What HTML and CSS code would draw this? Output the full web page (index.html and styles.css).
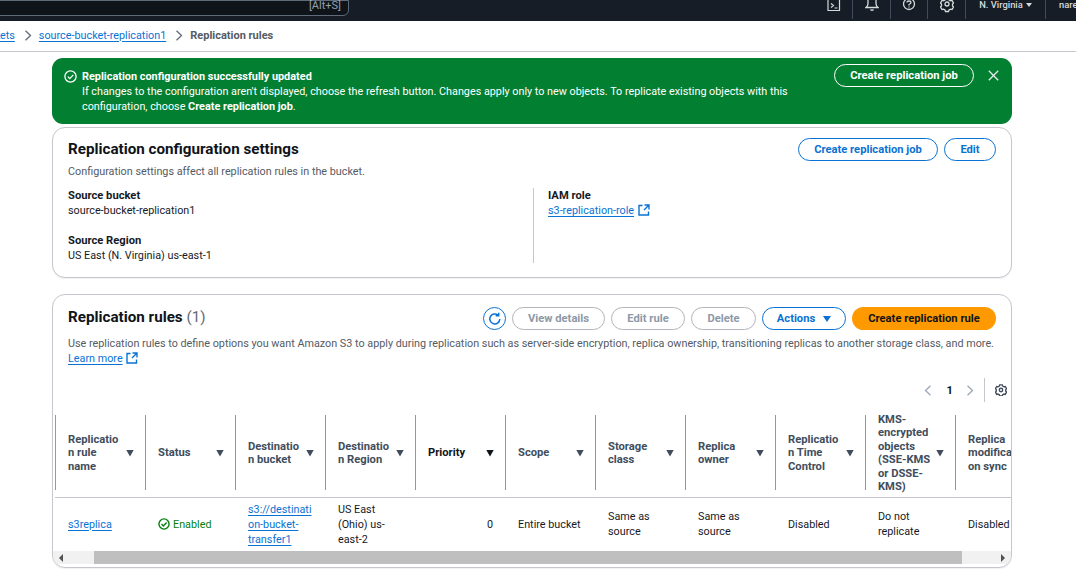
FILE: index.html
```html
<!DOCTYPE html>
<html lang="en">
<head>
<meta charset="utf-8">
<title>Replication rules</title>
<link rel="stylesheet" href="styles.css">
</head>
<body>
<header class="nav">
  <div class="search"><span class="search-key">[Alt+S]</span></div>
  <div class="nav-right">
    <span class="nav-item"><svg width="14" height="16" viewBox="0 0 14 16" fill="none" stroke="#d5dbdb" stroke-width="1.2"><path d="M2 -3h10.500v13.500h-11.500v-13z"/><path d="M4 3.500l2.500 2-2.500 2M7.500 8h3"/></svg></span>
    <span class="nav-item"><svg width="14" height="16" viewBox="0 0 14 16" fill="none" stroke="#d5dbdb" stroke-width="1.300"><path d="M3 -2v5.500q0 2.500-2 4h12q-2-1.500-2-4v-5.500M5.500 9.500q1.500 1.500 3 0"/></svg></span>
    <span class="nav-item nav-item-narrow"><svg width="14" height="16" viewBox="0 0 14 16" fill="none" stroke="#d5dbdb" stroke-width="1.300"><circle cx="7" cy="4" r="5.500"/><path d="M5 2.500q0-1.500 2-1.500t2 1.500q0 1-2 2v1M7 6.500v1"/></svg></span>
    <span class="nav-item"><svg width="14" height="16" viewBox="0 0 14 16" fill="none" stroke="#d5dbdb" stroke-width="1.300"><path d="M5.500 -1.500h3l.5 1.500 1.500.8 1.500-.4 1.500 2.600-1 1.100v1.800l1 1.100-1.500 2.600-1.500-.4-1.500.8-.5 1.500h-3l-.5-1.500-1.500-.8-1.500.4-1.500-2.600 1-1.100v-1.800l-1-1.100 1.500-2.600 1.500.4 1.500-.8z"/><circle cx="7" cy="4" r="2"/></svg></span>
    <span class="nav-item nav-region">N. Virginia <i class="nav-caret"></i></span>
    <span class="nav-user">nare</span>
  </div>
</header>

<nav class="crumbs">
  <a class="link crumb-cut" href="#">ckets</a>
  <svg class="crumb-sep" width="8" height="11" viewBox="0 0 8 11" fill="none" stroke="#5f6b7a" stroke-width="1.300"><path d="M1.500 .8l5 4.700-5 4.700"/></svg>
  <a class="link" href="#">source-bucket-replication1</a>
  <svg class="crumb-sep" width="8" height="11" viewBox="0 0 8 11" fill="none" stroke="#5f6b7a" stroke-width="1.300"><path d="M1.500 .8l5 4.700-5 4.700"/></svg>
  <span class="crumb-current">Replication rules</span>
</nav>

<main class="main">
  <section class="flash">
    <svg class="flash-icon" width="13" height="13" viewBox="0 0 13 13" fill="none" stroke="#fff" stroke-width="1.300"><circle cx="6.500" cy="6.500" r="5.600"/><path d="M3.800 6.600l2 2 3.500-3.700"/></svg>
    <div class="flash-text">
      <strong>Replication configuration successfully updated</strong><br>
      If changes to the configuration aren't displayed, choose the refresh button. Changes apply only to new objects. To replicate existing objects with this<br>
      configuration, choose <strong>Create replication job</strong>.
    </div>
    <button class="btn btn-flash">Create replication job</button>
    <svg class="flash-close" width="11" height="11" viewBox="0 0 11 11" fill="none" stroke="#e9ebed" stroke-width="1.300"><path d="M.8 .8l9.400 9.400M10.200 .8l-9.400 9.400"/></svg>
  </section>

  <section class="card card-config">
    <div class="card-head">
      <h2 class="title">Replication configuration settings</h2>
      <div class="actions">
        <button class="btn btn-normal btn-job">Create replication job</button>
        <button class="btn btn-normal btn-edit">Edit</button>
      </div>
    </div>
    <p class="desc desc-config">Configuration settings affect all replication rules in the bucket.</p>
    <div class="config-grid">
      <div class="config-col">
        <div class="kv"><div class="key">Source bucket</div><div>source-bucket-replication1</div></div>
        <div class="kv"><div class="key">Source Region</div><div>US East (N. Virginia) us-east-1</div></div>
      </div>
      <div class="config-col config-col-right">
        <div class="kv"><div class="key">IAM role</div><div><a class="link" href="#">s3-replication-role</a> <svg class="ext" width="12" height="12" viewBox="0 0 12 12" fill="none" stroke="#0972d3" stroke-width="1.400"><path d="M4.500 1.500h-3.500v9.500h9.500v-3.500M6.500 1h4.500v4.500M11 1l-5 5"/></svg></div></div>
      </div>
    </div>
  </section>

  <section class="card card-rules">
    <div class="card-head card-head-rules">
      <h2 class="title title-rules">Replication rules <span class="count">(1)</span></h2>
      <div class="actions">
        <button class="btn btn-normal btn-refresh" aria-label="Refresh"><svg width="14" height="14" viewBox="0 0 14 14" fill="none" stroke="#0972d3" stroke-width="1.500"><path d="M11.800 7a5 5 0 1 1-1.800-3.900M10.700 .8v3h-3"/></svg></button>
        <button class="btn btn-off btn-view">View details</button>
        <button class="btn btn-off btn-rule">Edit rule</button>
        <button class="btn btn-off btn-del">Delete</button>
        <button class="btn btn-normal btn-actions">Actions <i class="caret-blue"></i></button>
        <button class="btn btn-primary">Create replication rule</button>
      </div>
    </div>
    <p class="desc desc-rules">Use replication rules to define options you want Amazon S3 to apply during replication such as server-side encryption, replica ownership, transitioning replicas to another storage class, and more.<br><a class="link" href="#">Learn more</a> <svg class="ext" width="12" height="12" viewBox="0 0 12 12" fill="none" stroke="#0972d3" stroke-width="1.400"><path d="M4.500 1.500h-3.500v9.500h9.500v-3.500M6.500 1h4.500v4.500M11 1l-5 5"/></svg></p>
    <div class="pager">
      <svg width="8" height="11" viewBox="0 0 8 11" fill="none" stroke="#9ba7b6" stroke-width="1.300"><path d="M6.500 .8l-5 4.700 5 4.700"/></svg>
      <b class="page-num">1</b>
      <svg width="8" height="11" viewBox="0 0 8 11" fill="none" stroke="#9ba7b6" stroke-width="1.300"><path d="M1.500 .8l5 4.700-5 4.700"/></svg>
      <span class="pager-rule"></span>
      <svg width="12" height="12" viewBox="0 0 14 14" fill="none" stroke="#414d5c" stroke-width="1.600"><path d="M5.500 1h3l.5 1.500 1.500.8 1.500-.4 1.500 2.600-1 1.100v1.800l1 1.100-1.500 2.600-1.500-.4-1.500.8-.5 1.500h-3l-.5-1.500-1.500-.8-1.500.4-1.500-2.600 1-1.100v-1.800l-1-1.100 1.500-2.600 1.500.4 1.500-.8z"/><circle cx="7" cy="7" r="2"/></svg>
    </div>
    <div class="table-wrap">
      <div class="table">
        <div class="th"><span>Replicatio<br>n rule<br>name</span><i class="sort"></i></div>
        <div class="th"><span>Status</span><i class="sort"></i></div>
        <div class="th"><span>Destinatio<br>n bucket</span><i class="sort"></i></div>
        <div class="th"><span>Destinatio<br>n Region</span><i class="sort"></i></div>
        <div class="th th-active"><span>Priority</span><i class="sort sort-active"></i></div>
        <div class="th"><span>Scope</span><i class="sort"></i></div>
        <div class="th"><span>Storage<br>class</span><i class="sort"></i></div>
        <div class="th"><span>Replica<br>owner</span><i class="sort"></i></div>
        <div class="th"><span>Replicatio<br>n Time<br>Control</span><i class="sort"></i></div>
        <div class="th"><span>KMS-<br>encrypted<br>objects<br>(SSE-KMS<br>or DSSE-<br>KMS)</span><i class="sort"></i></div>
        <div class="th"><span>Replica<br>modificati<br>on sync</span></div>

        <div class="td"><a class="link" href="#">s3replica</a></div>
        <div class="td td-ok"><svg width="12" height="12" viewBox="0 0 13 13" fill="none" stroke="#037f0c" stroke-width="1.500"><circle cx="6.500" cy="6.500" r="5.500"/><path d="M3.800 6.600l2 2 3.500-3.700"/></svg> Enabled</div>
        <div class="td"><a class="link" href="#">s3://destinati<br>on-bucket-<br>transfer1</a></div>
        <div class="td">US East<br>(Ohio) us-<br>east-2</div>
        <div class="td td-num">0</div>
        <div class="td">Entire bucket</div>
        <div class="td">Same as<br>source</div>
        <div class="td">Same as<br>source</div>
        <div class="td">Disabled</div>
        <div class="td">Do not<br>replicate</div>
        <div class="td">Disabled</div>
      </div>
    </div>
    <div class="scrollbar">
      <span class="sb-btn sb-left"><i></i></span>
      <span class="sb-thumb"></span>
      <span class="sb-btn sb-right"><i></i></span>
    </div>
  </section>
</main>
</body>
</html>
```

FILE: styles.css
```css
* { box-sizing: border-box; }
html, body { margin: 0; padding: 0; }
body {
  background: #fff;
  color: #16191f;
  font-family: Roboto, "Noto Sans", "Liberation Sans", sans-serif;
  font-size: 10.8px;
  line-height: 15px;
  overflow: hidden;
  height: 584px;
}
.link { color: #0972d3; text-decoration: underline; text-underline-offset: 2px; }

/* top nav */
.nav {
  display: flex;
  align-items: flex-start;
  height: 21px;
  background: #161d26;
  overflow: hidden;
  color: #d5dbdb;
}
.search {
  flex: none;
  width: 360px;
  height: 16px;
  margin: 0 0 0 -11px;
  border: 1px solid #5f6b7a;
  border-radius: 0 0 6px 6px;
  background: #0f141a;
  display: flex;
  justify-content: flex-end;
  align-items: flex-end;
  padding: 0 7px 3px 0;
}
.search-key { color: #95a1ad; font-size: 11px; line-height: 12px; }
.nav-right { display: flex; flex: none; margin-left: 466px; height: 19px; }
.nav-item {
  flex: none;
  width: 38px;
  height: 19px;
  border-right: 1px solid #414d5c;
  display: flex;
  align-items: flex-start;
  justify-content: center;
  overflow: hidden;
}
.nav-item-narrow { width: 37px; }
.nav-region {
  width: 80px;
  font-size: 9.400px;
  font-weight: 500;
  line-height: 9px;
  gap: 3px;
  white-space: nowrap;
}
.nav-caret {
  width: 0; height: 0; margin-top: 3px;
  border: 3.500px solid transparent; border-bottom: 0;
  border-top: 4px solid #d5dbdb;
}
.nav-user { margin-left: 13px; font-size: 9.400px; line-height: 9px; font-weight: 500; }

/* breadcrumbs */
.crumbs {
  height: 31px;
  border-bottom: 1px solid #c6c6cd;
  display: flex;
  align-items: center;
  padding-bottom: 2px;
  white-space: nowrap;
}
.crumb-cut { margin-left: -11px; }
.crumb-sep { margin: 0 7px 0 9px; flex: none; }
.crumb-current { color: #545b64; font-weight: 700; font-size: 11px; }

/* content */
.main { padding: 6px 64px 0 52px; }

.flash {
  height: 66px;
  background: #037f32;
  color: #fff;
  border-radius: 11px;
  display: flex;
  align-items: flex-start;
  padding: 6px 12px 0 12px;
}
.flash-icon { flex: none; margin-top: 6px; }
.flash-text { margin: 5px 0 0 5px; flex: 1; min-width: 0; white-space: nowrap; }
.flash-text strong { font-size: 10.9px; }
.flash-close { flex: none; margin: 6px 1px 0 14px; }

.btn {
  font-family: inherit;
  font-size: 11.2px;
  font-weight: 700;
  line-height: 13px;
  height: 23px;
  padding: 0;
  border-radius: 12px;
  background: transparent;
  white-space: nowrap;
  display: inline-flex;
  align-items: center;
  justify-content: center;
  flex: none;
}
.btn-flash { width: 140px; color: #fff; border: 1px solid #fff; margin-left: 12px; }
.btn-normal { color: #0972d3; border: 1.300px solid #0972d3; background: #fff; }
.btn-off { color: #8d99a8; border: 1.300px solid #b4b4bb; background: #fff; }
.btn-primary { width: 144px; background: #ff9900; color: #0f141a; border: 0; }
.btn-job { width: 140px; }
.btn-edit { width: 52px; }
.btn-refresh { width: 23px; }
.btn-view { width: 93px; }
.btn-rule { width: 74px; }
.btn-del { width: 65px; }
.btn-actions { width: 84px; gap: 8px; }
.caret-blue {
  width: 0; height: 0;
  border: 4px solid transparent; border-bottom: 0;
  border-top: 6px solid #0972d3;
}

.card {
  border: 1px solid #c6c6cd;
  border-radius: 13px;
  background: #fff;
  box-shadow: 0 1px 1px rgba(0, 28, 36, .06);
}
.card-config { margin-top: 3px; height: 151px; padding: 10px 15px 0; }
.card-rules { margin-top: 16px; height: 274px; padding: 12px 0 0; overflow: hidden; }
.card-head { display: flex; align-items: flex-start; justify-content: space-between; }
.card-head-rules { padding: 0 15px; }
.title {
  margin: 0;
  font-size: 15.2px;
  line-height: 23px;
  font-weight: 700;
  color: #0f141a;
}
.title-rules { line-height: 20px; }
.count { font-weight: 400; color: #5f6b7a; }
.actions { display: flex; gap: 6px; }
.desc { margin: 0; color: #545b64; }
.desc-config { margin-top: 3px; }
.desc-rules { margin-top: 6px; padding: 0 15px; white-space: nowrap; }
.ext { vertical-align: -2px; margin-left: 1px; }

.config-grid { display: grid; grid-template-columns: 465px 1fr; margin-top: 9px; height: 75px; }
.config-col { display: flex; flex-direction: column; gap: 15px; }
.config-col-right { border-left: 1px solid #c6c6cd; padding-left: 14px; }
.kv { color: #16191f; white-space: nowrap; }
.key { font-weight: 700; font-size: 11.2px; }

/* pager */
.pager {
  display: flex;
  align-items: center;
  justify-content: flex-end;
  height: 24px;
  margin-top: 12px;
  padding-right: 4px;
}
.page-num { margin: 0 13px 0 15px; color: #0f141a; font-size: 11.2px; }
.pager-rule { width: 1px; height: 24px; background: #c6c6cd; margin: 0 10px; }

/* table */
.table-wrap { overflow: hidden; margin-top: 11px; }
.table {
  display: grid;
  grid-template-columns: repeat(11, 90px);
  grid-template-rows: 85px 53px;
  width: 990px;
  margin-left: 2px;
}
.th {
  display: flex;
  align-items: center;
  justify-content: space-between;
  padding: 0 11px 4px 13px;
  color: #414d5c;
  font-size: 11.2px;
  font-weight: 700;
  line-height: 13.500px;
  white-space: nowrap;
  border-bottom: 1px solid #c6c6cd;
  background:
    linear-gradient(#8d99a8, #8d99a8) left 2px / 1px 75px no-repeat;
}
.th-active { color: #0f141a; }
.sort {
  flex: none;
  width: 8px;
  height: 7px;
  background: #414d5c;
  clip-path: polygon(0 0, 100% 0, 50% 100%, 0 0, 25% 28%, 75% 28%, 50% 72%, 25% 28%);
}
.sort-active { background: #0f141a; clip-path: polygon(0 0, 100% 0, 50% 100%); }
.td {
  display: flex;
  align-items: center;
  flex-wrap: wrap;
  align-content: center;
  padding: 0 0 1px 13px;
  color: #16191f;
  white-space: nowrap;
}
.td-ok { color: #037f0c; gap: 3px; }
.td-num { padding: 0 12px 1px 0; justify-content: flex-end; }

/* scrollbar */
.scrollbar { display: flex; height: 13px; background: #f1f1f1; }
.sb-btn { flex: none; width: 41px; display: flex; align-items: center; }
.sb-left { padding-left: 6px; }
.sb-right { width: 49px; justify-content: flex-end; padding-right: 6px; }
.sb-left i { border: 4px solid transparent; border-left: 0; border-right: 4px solid #505050; }
.sb-right i { border: 4px solid transparent; border-right: 0; border-left: 4px solid #505050; }
.sb-thumb { flex: 1; background: #bfbfbf; }
```
